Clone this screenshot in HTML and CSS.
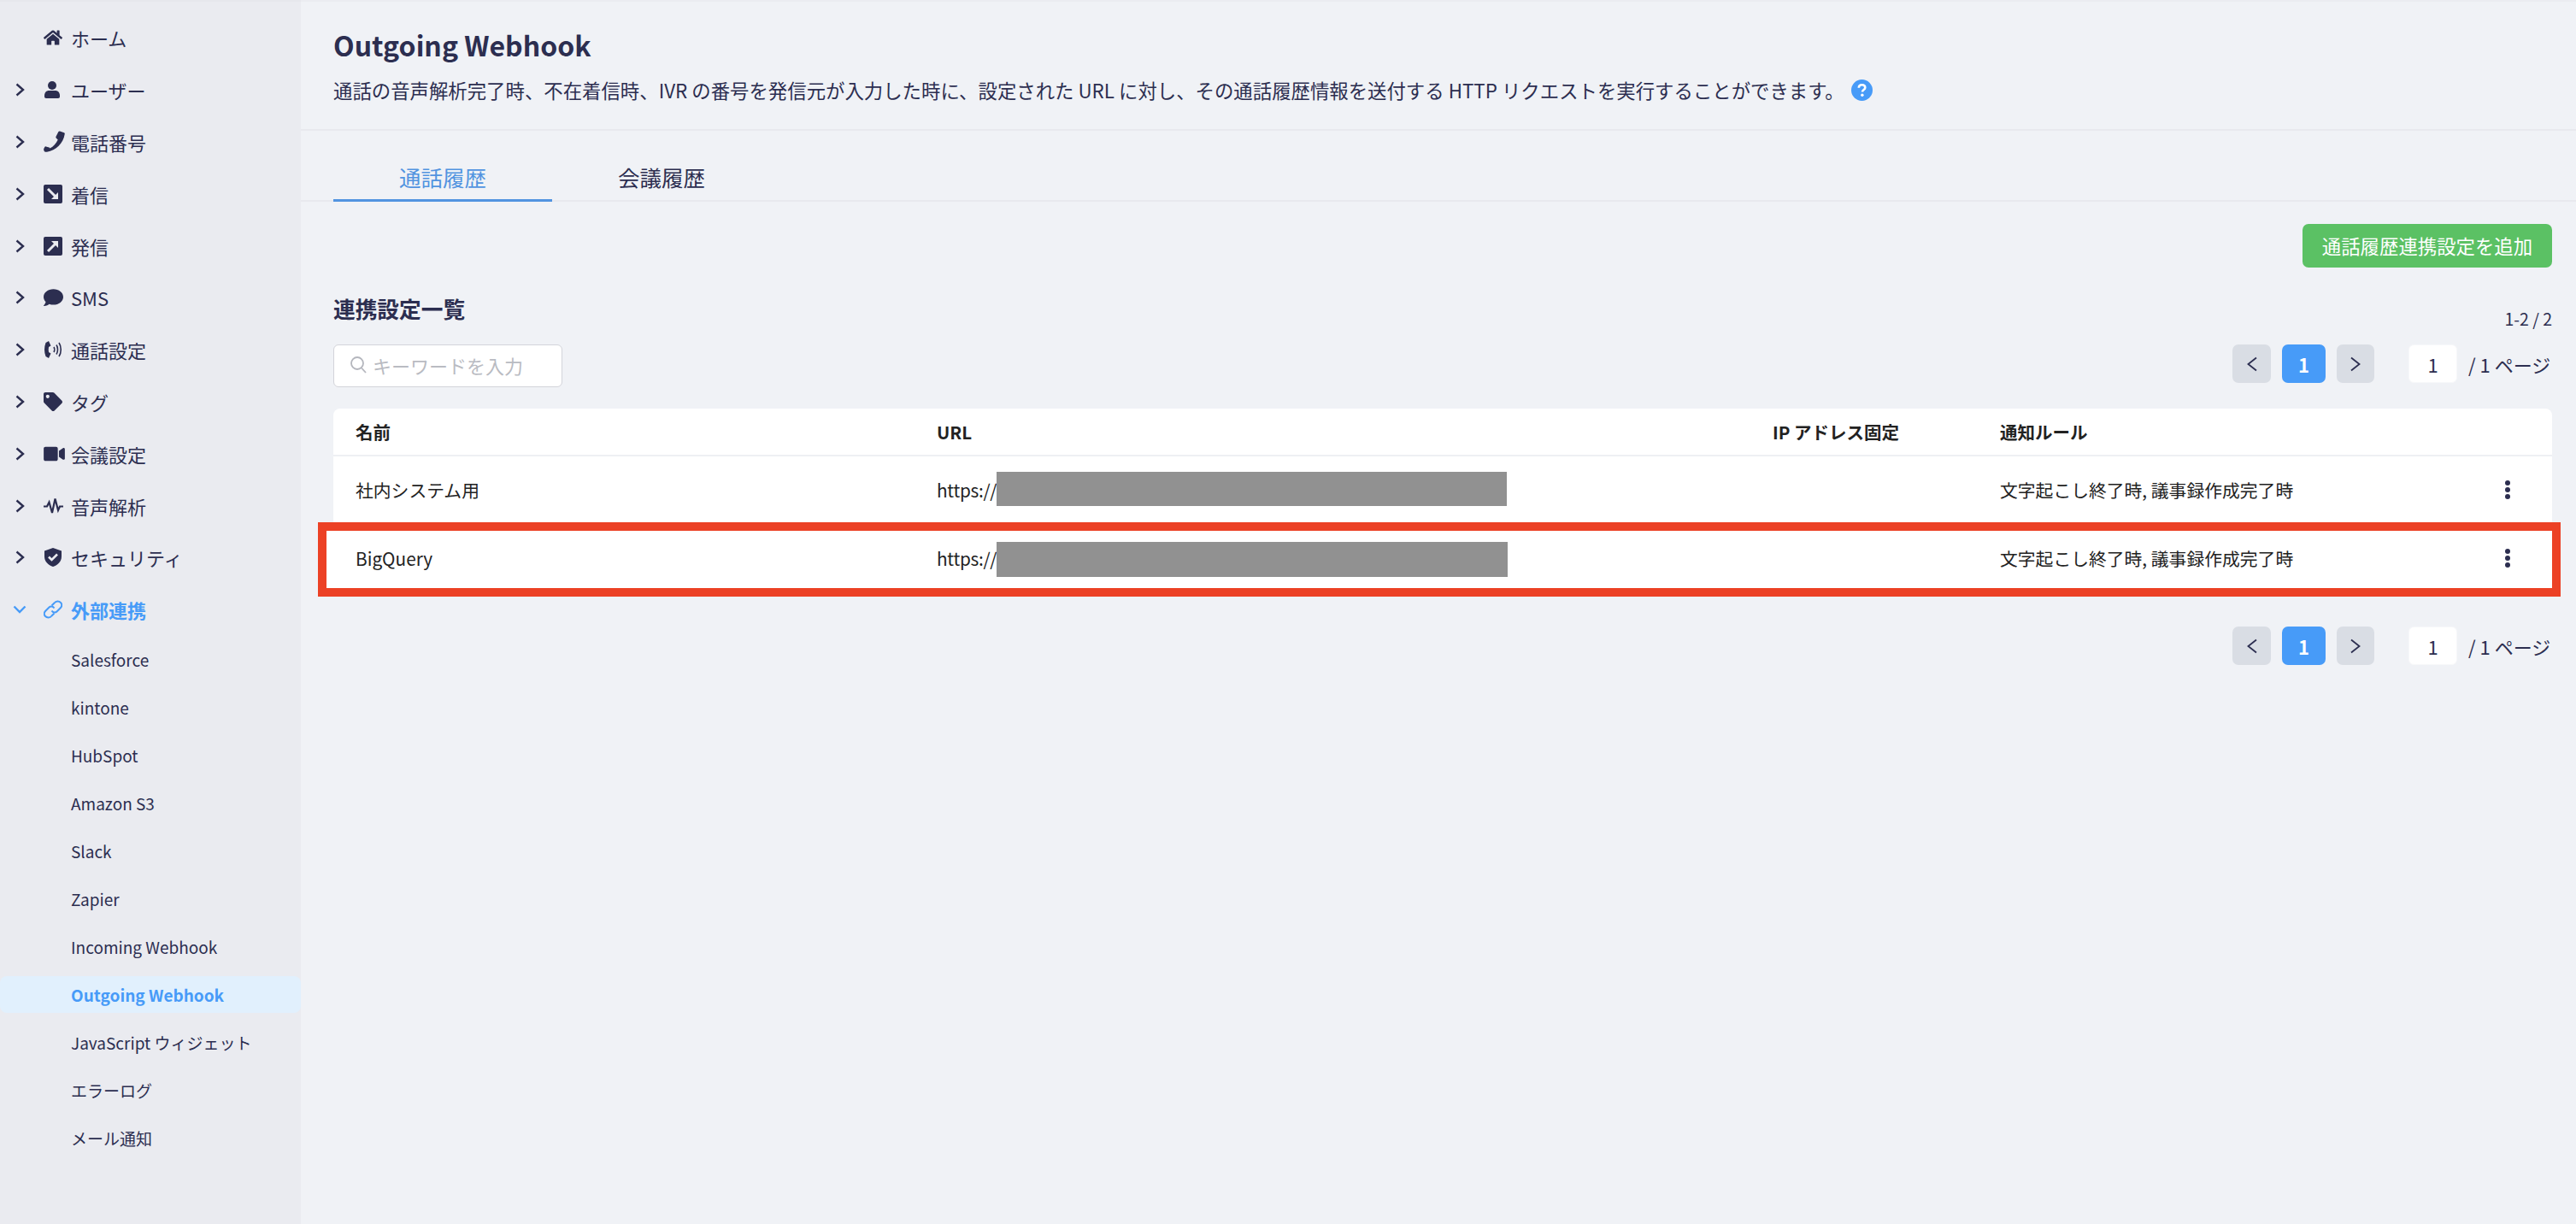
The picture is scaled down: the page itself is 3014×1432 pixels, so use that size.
FILE: index.html
```html
<!DOCTYPE html>
<html lang="ja">
<head>
    <meta charset="UTF-8">
    <meta name="viewport" content="width=device-width, initial-scale=1.0">
    <title>Outgoing Webhook</title>
    <link rel="stylesheet" href="styles.css">
</head>
<body>
    <aside class="sidebar">
        <nav>
            <a class="nav-item">
                <span class="nav-arrow"></span>
                <span class="nav-icon"><svg width="22" height="20" viewBox="0 0 576 512" fill="currentColor"><path d="M280.37 148.26L96 300.11V464a16 16 0 0 0 16 16l112.06-.29a16 16 0 0 0 15.92-16V368a16 16 0 0 1 16-16h64a16 16 0 0 1 16 16v95.64a16 16 0 0 0 16 16.05L464 480a16 16 0 0 0 16-16V300L295.67 148.26a12.19 12.19 0 0 0-15.3 0zM571.6 251.47L488 182.56V44.05a12 12 0 0 0-12-12h-56a12 12 0 0 0-12 12v72.61L318.47 43a48 48 0 0 0-61 0L4.34 251.47a12 12 0 0 0-1.6 16.9l25.5 31A12 12 0 0 0 45.15 301l235.22-193.74a12.19 12.19 0 0 1 15.3 0L530.9 301a12 12 0 0 0 16.9-1.6l25.5-31a12 12 0 0 0-1.7-16.93z"/></svg></span>
                <span>ホーム</span>
            </a>
            <a class="nav-item">
                <span class="nav-arrow"><svg width="11" height="16" viewBox="0 0 11 16" fill="none" stroke="currentColor" stroke-width="2.4"><path d="M1.5 1.5L9 8L1.5 14.5"/></svg></span>
                <span class="nav-icon nav-icon-user"><svg width="18" height="20" viewBox="0 0 18 20" fill="currentColor"><circle cx="9" cy="5" r="5"/><path d="M0 17c0-4 2.5-6 5-6h8c2.5 0 5 2 5 6v1c0 1.2-.8 2-2 2H2c-1.2 0-2-.8-2-2z"/></svg></span>
                <span>ユーザー</span>
            </a>
            <a class="nav-item">
                <span class="nav-arrow"><svg width="11" height="16" viewBox="0 0 11 16" fill="none" stroke="currentColor" stroke-width="2.4"><path d="M1.5 1.5L9 8L1.5 14.5"/></svg></span>
                <span class="nav-icon"><svg width="25" height="25" viewBox="0 0 25 25" fill="currentColor"><path d="M19 .6l5 1.6c.6.2.9.7.8 1.3C23 15 14.5 23 4 24.8c-.9.1-2.3.1-3-.6-.9-.9-1.1-2.7-.6-3.5l.9-1.7c.3-.5.9-.8 1.5-.6l3.6 1c.5.1.9.5 1 1 4.2-2.1 7.4-5.7 9.3-10l-2-1.900c-.4-.4-.5-.9-.3-1.400l2.900-5.900c.2-.4.9-.7 1.700-.6z"/></svg></span>
                <span>電話番号</span>
            </a>
            <a class="nav-item">
                <span class="nav-arrow"><svg width="11" height="16" viewBox="0 0 11 16" fill="none" stroke="currentColor" stroke-width="2.4"><path d="M1.5 1.5L9 8L1.5 14.5"/></svg></span>
                <span class="nav-icon"><svg width="22" height="22" viewBox="0 0 22 22"><rect width="22" height="22" rx="2" fill="currentColor"/><path d="M5 5L14 14" stroke="#eaebf0" stroke-width="3"/><path d="M17 9V17H9Z" fill="#eaebf0"/></svg></span>
                <span>着信</span>
            </a>
            <a class="nav-item">
                <span class="nav-arrow"><svg width="11" height="16" viewBox="0 0 11 16" fill="none" stroke="currentColor" stroke-width="2.4"><path d="M1.5 1.5L9 8L1.5 14.5"/></svg></span>
                <span class="nav-icon"><svg width="22" height="22" viewBox="0 0 22 22"><rect width="22" height="22" rx="2" fill="currentColor"/><path d="M5 17L14 8" stroke="#eaebf0" stroke-width="3"/><path d="M9 5H17V13Z" fill="#eaebf0"/></svg></span>
                <span>発信</span>
            </a>
            <a class="nav-item">
                <span class="nav-arrow"><svg width="11" height="16" viewBox="0 0 11 16" fill="none" stroke="currentColor" stroke-width="2.4"><path d="M1.5 1.5L9 8L1.5 14.5"/></svg></span>
                <span class="nav-icon"><svg width="23" height="20" viewBox="0 24 512 456" fill="currentColor" preserveAspectRatio="none"><path d="M256 32C114.6 32 0 125.1 0 240c0 49.6 21.4 95 57 130.7C44.5 421.1 2.7 466 2.2 466.5c-2.2 2.3-2.8 5.7-1.5 8.7S4.8 480 8 480c66.3 0 116-31.8 140.6-51.4 32.7 12.3 69 19.4 107.4 19.4 141.4 0 256-93.1 256-208S397.4 32 256 32z"/></svg></span>
                <span>SMS</span>
            </a>
            <a class="nav-item">
                <span class="nav-arrow"><svg width="11" height="16" viewBox="0 0 11 16" fill="none" stroke="currentColor" stroke-width="2.4"><path d="M1.5 1.5L9 8L1.5 14.5"/></svg></span>
                <span class="nav-icon"><svg width="22" height="22" viewBox="0 0 22 22" fill="none" stroke="currentColor"><path d="M6 1L2.5 3C.5 8 .5 14 2.5 19L6 21L8.5 15.5L6 14C5.6 12 5.6 10 6 8L8.5 6.5Z" fill="currentColor" stroke="none"/><path d="M12 8C13 9.5 13 12.5 12 14" stroke-width="1.6"/><path d="M15 5.5C17 8.5 17 13.5 15 16.5" stroke-width="1.6"/><path d="M18 3C21 7.5 21 14.5 18 19" stroke-width="1.6"/></svg></span>
                <span>通話設定</span>
            </a>
            <a class="nav-item">
                <span class="nav-arrow"><svg width="11" height="16" viewBox="0 0 11 16" fill="none" stroke="currentColor" stroke-width="2.4"><path d="M1.5 1.5L9 8L1.5 14.5"/></svg></span>
                <span class="nav-icon"><svg width="22" height="22" viewBox="0 0 512 512" fill="currentColor"><path d="M0 252.118V48C0 21.49 21.49 0 48 0h204.118a48 48 0 0 1 33.941 14.059l211.882 211.882c18.745 18.745 18.745 49.137 0 67.882L293.823 497.941c-18.745 18.745-49.137 18.745-67.882 0L14.059 286.059A48 48 0 0 1 0 252.118zM112 64c-26.51 0-48 21.49-48 48s21.49 48 48 48 48-21.49 48-48-21.49-48-48-48z"/></svg></span>
                <span>タグ</span>
            </a>
            <a class="nav-item">
                <span class="nav-arrow"><svg width="11" height="16" viewBox="0 0 11 16" fill="none" stroke="currentColor" stroke-width="2.4"><path d="M1.5 1.5L9 8L1.5 14.5"/></svg></span>
                <span class="nav-icon"><svg width="25" height="22" viewBox="0 0 576 512" fill="currentColor"><path d="M336.2 64H47.8C21.4 64 0 85.4 0 111.8v288.4C0 426.6 21.4 448 47.8 448h288.4c26.4 0 47.8-21.4 47.8-47.8V111.8c0-26.4-21.4-47.8-47.8-47.8zm189.4 37.7L416 177.3v157.4l109.6 75.5c21.2 14.6 50.4-.3 50.4-25.8V127.5c0-25.4-29.1-40.4-50.4-25.8z"/></svg></span>
                <span>会議設定</span>
            </a>
            <a class="nav-item">
                <span class="nav-arrow"><svg width="11" height="16" viewBox="0 0 11 16" fill="none" stroke="currentColor" stroke-width="2.4"><path d="M1.5 1.5L9 8L1.5 14.5"/></svg></span>
                <span class="nav-icon"><svg width="23" height="20" viewBox="0 0 23 20" fill="none" stroke="currentColor" stroke-width="2.2"><path d="M0 10.5H4L6.5 5.5L10 18L13.5 1.5L17 15L19 10.5H23"/></svg></span>
                <span>音声解析</span>
            </a>
            <a class="nav-item">
                <span class="nav-arrow"><svg width="11" height="16" viewBox="0 0 11 16" fill="none" stroke="currentColor" stroke-width="2.4"><path d="M1.5 1.5L9 8L1.5 14.5"/></svg></span>
                <span class="nav-icon"><svg width="22" height="22" viewBox="0 0 22 22"><path d="M11 0L21 3.5V10C21 16 16.5 20 11 22C5.5 20 1 16 1 10V3.5Z" fill="currentColor"/><path d="M6 10.5L9.5 14L16 7.5" fill="none" stroke="#eaebf0" stroke-width="2.6"/></svg></span>
                <span>セキュリティ</span>
            </a>
            <a class="nav-item nav-item-open">
                <span class="nav-arrow"><svg width="16" height="10" viewBox="0 0 16 10" fill="none" stroke="currentColor" stroke-width="2.4"><path d="M1.5 1.5L8 8L14.5 1.5"/></svg></span>
                <span class="nav-icon"><svg width="22" height="22" viewBox="0 0 22 22" fill="none" stroke="currentColor" stroke-width="2"><path d="M9.5 6.5L12.5 3.5C14.5 1 18 1 20 3S21.5 7.5 19.5 9.5L15.5 13.5C14 15 11 15 9.5 12.5"/><path d="M12.5 15.5L9.5 18.5C7.5 21 4 21 2 19S.5 14.5 2.5 12.5L6.5 8.5C8 7 11 7 12.5 9.5"/></svg></span>
                <span>外部連携</span>
            </a>
            <div class="sub-list">
                <a class="sub-item">Salesforce</a>
                <a class="sub-item">kintone</a>
                <a class="sub-item">HubSpot</a>
                <a class="sub-item">Amazon S3</a>
                <a class="sub-item">Slack</a>
                <a class="sub-item">Zapier</a>
                <a class="sub-item">Incoming Webhook</a>
                <a class="sub-item sub-item-active">Outgoing Webhook</a>
                <a class="sub-item">JavaScript ウィジェット</a>
                <a class="sub-item">エラーログ</a>
                <a class="sub-item">メール通知</a>
            </div>
        </nav>
    </aside>

    <main class="main">
        <header class="page-header">
            <h1>Outgoing Webhook</h1>
            <p class="page-desc">
                通話の音声解析完了時、不在着信時、IVR の番号を発信元が入力した時に、設定された URL に対し、その通話履歴情報を送付する HTTP リクエストを実行することができます。
                <svg class="help-icon" width="25" height="25" viewBox="0 0 25 25"><circle cx="12.5" cy="12.5" r="12.5" fill="#479bf8"/><path d="M8.8 9.8C8.8 7.5 10.5 6.2 12.6 6.2C14.8 6.2 16.3 7.6 16.3 9.4C16.3 12 13 12 13 14.5" fill="none" stroke="#fff" stroke-width="2.6"/><circle cx="12.9" cy="18.3" r="1.7" fill="#fff"/></svg>
            </p>
        </header>

        <div class="tabs">
            <div class="tab tab-active">通話履歴</div>
            <div class="tab">会議履歴</div>
        </div>

        <section class="content">
            <div class="actions">
                <button class="btn-add">通話履歴連携設定を追加</button>
            </div>
            <div class="list-head">
                <h2>連携設定一覧</h2>
                <div class="list-count">1-2 / 2</div>
            </div>
            <div class="list-tools">
                <div class="search-box">
                    <svg width="20" height="22" viewBox="0 0 20 22" fill="none" stroke="#b4b6bd" stroke-width="1.8"><circle cx="9" cy="9" r="7"/><path d="M14 14.5L19 20"/></svg>
                    <span>キーワードを入力</span>
                </div>
                <div class="pager">
                    <div class="page-btn page-prev"><svg width="12" height="18" viewBox="0 0 12 18" fill="none" stroke="currentColor" stroke-width="1.8"><path d="M11 1.5L1.5 9L11 16.5"/></svg></div>
                    <div class="page-btn page-current">1</div>
                    <div class="page-btn page-next"><svg width="12" height="18" viewBox="0 0 12 18" fill="none" stroke="currentColor" stroke-width="1.8"><path d="M1 1.5L10.5 9L1 16.5"/></svg></div>
                    <div class="page-input">1</div>
                    <div class="page-total">/ 1 ページ</div>
                </div>
            </div>

            <div class="table">
                <div class="table-row table-head">
                    <div>名前</div>
                    <div>URL</div>
                    <div>IP アドレス固定</div>
                    <div>通知ルール</div>
                    <div></div>
                </div>
                <div class="table-row row-first">
                    <div>社内システム用</div>
                    <div class="url-cell"><span class="url-scheme">https://</span><span class="masked masked-a"></span></div>
                    <div></div>
                    <div>文字起こし終了時, 議事録作成完了時</div>
                    <div class="menu-cell"><svg width="8" height="22" viewBox="0 0 8 22" fill="#2c2e50"><circle cx="4" cy="3" r="3"/><circle cx="4" cy="11" r="3"/><circle cx="4" cy="19" r="3"/></svg></div>
                </div>
                <div class="table-row row-marked">
                    <div>BigQuery</div>
                    <div class="url-cell"><span class="url-scheme">https://</span><span class="masked masked-b"></span></div>
                    <div></div>
                    <div>文字起こし終了時, 議事録作成完了時</div>
                    <div class="menu-cell"><svg width="8" height="22" viewBox="0 0 8 22" fill="#2c2e50"><circle cx="4" cy="3" r="3"/><circle cx="4" cy="11" r="3"/><circle cx="4" cy="19" r="3"/></svg></div>
                </div>
            </div>

            <div class="pager pager-bottom">
                <div class="page-btn page-prev"><svg width="12" height="18" viewBox="0 0 12 18" fill="none" stroke="currentColor" stroke-width="1.8"><path d="M11 1.5L1.5 9L11 16.5"/></svg></div>
                <div class="page-btn page-current">1</div>
                <div class="page-btn page-next"><svg width="12" height="18" viewBox="0 0 12 18" fill="none" stroke="currentColor" stroke-width="1.8"><path d="M1 1.5L10.5 9L1 16.5"/></svg></div>
                <div class="page-input">1</div>
                <div class="page-total">/ 1 ページ</div>
            </div>
        </section>
    </main>
</body>
</html>
```

FILE: styles.css
```css
* { box-sizing: border-box; }
html, body { height: 100%; }
body {
    margin: 0;
    display: flex;
    height: 1432px;
    overflow: hidden;
    font-family: "Noto Sans CJK JP", "Noto Sans", sans-serif;
    font-size: 22px;
    color: #2c2e50;
    background: #f0f2f6;
}

/* sidebar */
.sidebar {
    width: 352px;
    flex-shrink: 0;
    padding-top: 12px;
    border-top: 2px solid #e6e7ec;
    background: #eaebf0;
}
.nav-item {
    display: flex;
    align-items: center;
    height: 60.8px;
}
.nav-arrow {
    width: 50px;
    display: flex;
    justify-content: center;
    padding-right: 4px;
}
.nav-icon {
    width: 33px;
    display: flex;
    align-items: center;
    padding-left: 1px;
}
.nav-icon-user { padding-left: 2px; }
.nav-item-open {
    color: #479bf8;
    font-weight: 700;
}
.sub-list { padding-top: 6px; }
.sub-item {
    display: flex;
    align-items: center;
    height: 43px;
    margin-bottom: 13px;
    padding-left: 83px;
    border-radius: 8px;
    font-size: 19px;
}
.sub-item-active {
    background: #e1f0fd;
    color: #479bf8;
    font-weight: 700;
}

/* main */
.main {
    flex: 1;
    min-width: 0;
    border-top: 2px solid #ebecf1;
}
.page-header {
    height: 151px;
    padding: 26px 0 0 38px;
    border-bottom: 2px solid #e8e9ee;
}
.page-header h1 {
    margin: 0;
    font-size: 32px;
    font-weight: 700;
    line-height: 48px;
}
.page-desc {
    display: flex;
    align-items: center;
    gap: 8px;
    margin: 13px 0 0;
    font-size: 22.4px;
    line-height: 32px;
}
.help-icon { flex-shrink: 0; }

.tabs {
    display: flex;
    height: 83px;
    padding-left: 38px;
    border-bottom: 2px solid #e8e9ee;
}
.tab {
    height: 83px;
    padding: 0 77px;
    font-size: 25.5px;
    line-height: 108px;
    overflow: hidden;
}
.tab-active {
    color: #5294e0;
    border-bottom: 3px solid #5294e0;
}

.content { padding: 26px 28px 0 38px; }
.actions {
    display: flex;
    justify-content: flex-end;
}
.btn-add {
    width: 292px;
    height: 51px;
    padding: 0 0 2px;
    border: none;
    border-radius: 7px;
    background: #5bc164;
    color: #fff;
    font-family: inherit;
    font-size: 22.4px;
}
.list-head {
    display: flex;
    justify-content: space-between;
    height: 90px;
}
.list-head h2 {
    margin: 29px 0 0;
    font-size: 25.7px;
    font-weight: 700;
    line-height: 38px;
}
.list-count {
    margin-top: 47px;
    font-size: 19.5px;
    line-height: 26px;
}
.list-tools {
    display: flex;
    justify-content: space-between;
    height: 50px;
    margin-bottom: 25px;
}
.search-box {
    display: flex;
    align-items: center;
    gap: 7px;
    width: 268px;
    padding: 0 0 2px 18px;
    border: 1px solid #d3d4da;
    border-radius: 6px;
    background: #fff;
    color: #b9bbc2;
}

/* pagination */
.pager {
    display: flex;
    align-items: center;
    height: 45px;
}
.page-btn {
    display: flex;
    align-items: center;
    justify-content: center;
    height: 45px;
    border-radius: 7px;
    background: #d9dde4;
}
.page-prev { width: 45px; }
.page-next { width: 44px; }
.page-current {
    width: 51px;
    margin: 0 13px;
    background: #479bf8;
    color: #fff;
    font-weight: 700;
}
.page-input {
    display: flex;
    align-items: center;
    justify-content: center;
    width: 57px;
    height: 45px;
    margin: 0 13px 0 40px;
    border: 1px solid #f7f8fa;
    border-radius: 6px;
    background: #fff;
}
.page-total { width: 98px; white-space: nowrap; }
.pager-bottom {
    justify-content: flex-end;
    margin-top: 41px;
}

/* table */
.table {
    border-radius: 8px 8px 0 0;
    background: #fff;
    color: #222;
    font-size: 20.8px;
}
.table-row {
    display: grid;
    grid-template-columns: 680px 978px 266px 1fr 52px;
    align-items: center;
    padding: 0 26px;
}
.table-head {
    height: 56px;
    border-bottom: 2px solid #eef0f3;
    font-size: 20.5px;
    font-weight: 700;
}
.row-first {
    height: 84px;
    padding-bottom: 6px;
}
.row-marked {
    position: relative;
    height: 74px;
    padding-bottom: 4px;
}
/* red annotation frame drawn over the second row */
.row-marked::before {
    content: "";
    position: absolute;
    top: -7px;
    bottom: -6px;
    left: -18px;
    right: -10px;
    border: 10px solid #ec4125;
    background: #fff;
}
.row-marked > div { position: relative; }
.url-cell {
    display: flex;
    align-items: center;
}
.url-scheme {
    width: 70px;
    font-weight: 400;
    letter-spacing: -0.3px;
}
.masked {
    height: 40px;
    background: #919191;
}
.masked-a { width: 597px; margin-top: -2px; }
.masked-b { width: 598px; height: 41px; margin-top: 2px; }
.menu-cell {
    display: flex;
    justify-content: center;
}
```
